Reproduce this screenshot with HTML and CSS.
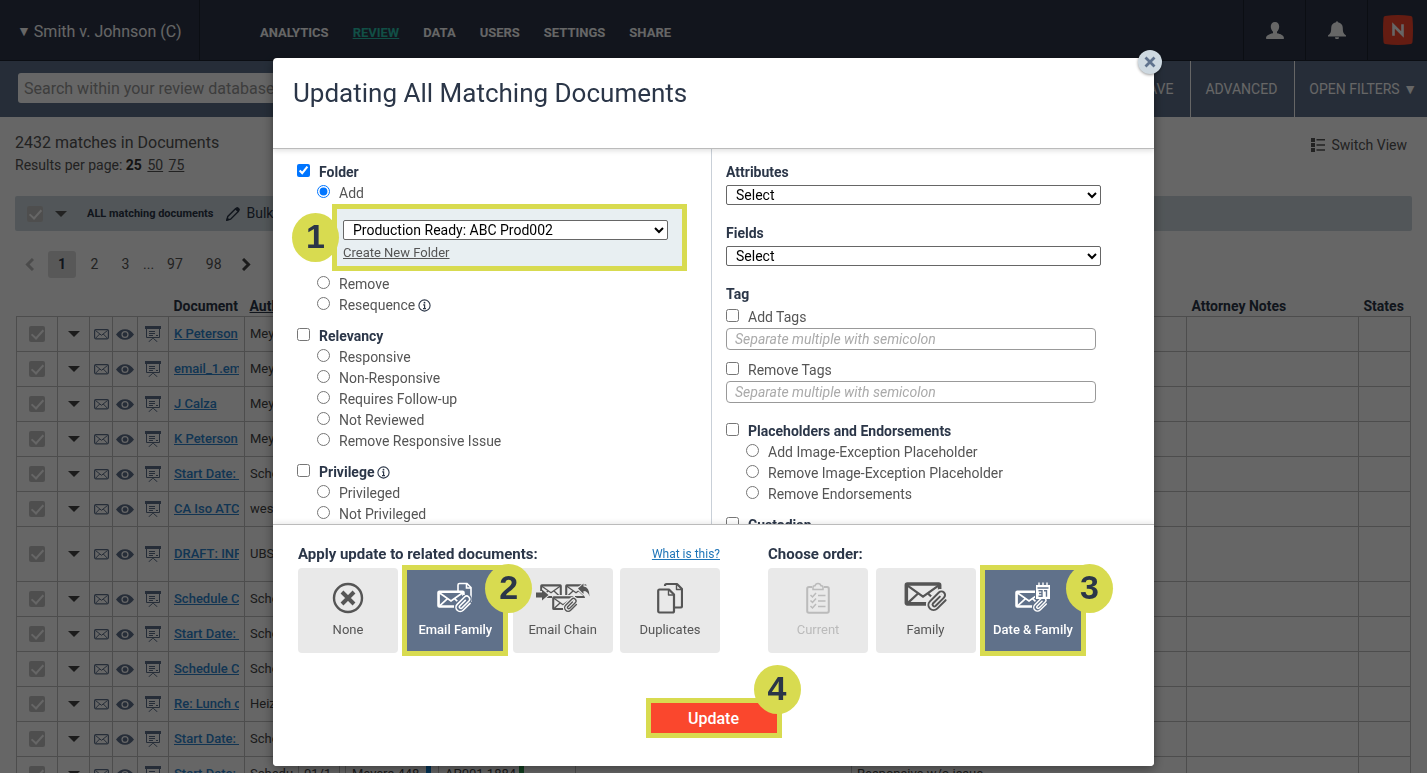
FILE: index.html
```
<!DOCTYPE html>
<html lang="en-US">
<head>
    <meta charset="UTF-8">
    <title>Updating All Matching Documents</title>
    <link rel="stylesheet" href="styles.css">
</head>
<body>

<!-- icon sprite -->
<svg class="sprite" aria-hidden="true">
    <symbol id="i-down" viewBox="0 0 12 6"><path fill="currentColor" d="M0 0h12L6 6z"/></symbol>
    <symbol id="i-mail" viewBox="0 0 15 11">
        <g fill="none" stroke="currentColor"><rect x=".6" y=".6" width="13.8" height="9.2" rx="1.2" stroke-width="1.2"/><path d="M1.5 1.5l6 4.8 6-4.8M1.8 9l3.9-4M13.2 9L9.3 5"/></g>
    </symbol>
    <symbol id="i-eye" viewBox="0 0 18 11">
        <path fill="currentColor" fill-rule="evenodd" d="M0 5.5C2.5 2 5.500.2 9 .2S15.500 2 18 5.500C15.500 9 12.500 10.800 9 10.800S2.500 9 0 5.500zM9 1.900a3.600 3.600 0 1 0 0 7.200 3.600 3.600 0 0 0 0-7.200z"/>
        <circle cx="9" cy="5.500" r="2.300" fill="currentColor"/>
    </symbol>
    <symbol id="i-board" viewBox="0 0 16 16">
        <path fill="currentColor" d="M0 0h16v3H0z"/>
        <path fill="none" stroke="currentColor" d="M1.500 3v8.500h13V3M4 5.500h6M4 7.500h6M4 9.500h4M11 9.500h2M8 12v1M7.500 12.500L3.500 16M8.500 12.500l4 3.500"/>
    </symbol>
    <symbol id="i-clip" viewBox="0 0 24 24">
        <path fill="none" stroke="currentColor" stroke-linecap="round" d="M21.400 11.100l-9.200 9.200a5.200 5.200 0 0 1-7.900-7.900l9.700-9.700a3.900 3.900 0 0 1 5.600 5.600l-9.200 9.200a2 2 0 0 1-2.800-2.800l7.500-7.500"/>
    </symbol>
    <symbol id="i-letter" viewBox="0 0 36 24">
        <path fill="none" stroke="currentColor" stroke-width="3.400" stroke-linejoin="round" d="M3 2h30q1 0 1 1v17q0 1-1 1H3q-1 0-1-1V3q0-1 1-1z"/>
        <path fill="none" stroke="currentColor" stroke-width="2.200" d="M2.500 3L18 14 33.500 3M3 20.500l10.500-9.700M33 20.500l-10.500-9.700"/>
    </symbol>
    <symbol id="i-info" viewBox="0 0 13 13">
        <circle cx="6.500" cy="6.500" r="5.600" fill="none" stroke="currentColor" stroke-width="1.100"/>
        <circle cx="6.500" cy="3.700" r=".9" fill="currentColor"/>
        <path fill="none" stroke="currentColor" stroke-width="1.200" d="M5.200 5.900h1.400v3.500M5 9.600h3"/>
    </symbol>
</svg>

<div class="page">
    <header class="topbar">
        <div class="case"><span class="caret">▼</span>Smith v. Johnson (C)</div>
        <nav class="mainnav">
            <a href="#">ANALYTICS</a>
            <a href="#" class="current">REVIEW</a>
            <a href="#">DATA</a>
            <a href="#">USERS</a>
            <a href="#">SETTINGS</a>
            <a href="#">SHARE</a>
        </nav>
        <a class="topicon" href="#" aria-label="Account">
            <svg width="18" height="17" viewBox="0 0 18 17"><path fill="currentColor" d="M9 0c2.600 0 4.200 1.900 4.200 4.500 0 2.200-1 4.200-2.200 5.200v1.500c3.500.7 7 2 7 5.100 0 .4-.3.700-.7.700H.7c-.4 0-.7-.3-.7-.7 0-3.100 3.500-4.400 7-5.100V9.700c-1.200-1-2.200-3-2.200-5.200C4.800 1.900 6.400 0 9 0z"/></svg>
        </a>
        <a class="topicon" href="#" aria-label="Notifications">
            <svg width="18" height="18" viewBox="0 0 18 18"><path fill="currentColor" d="M8 1.200a1 1 0 0 1 2 0c3 .5 4.800 2.600 4.800 5.800 0 4.500.9 5.800 3.200 7.500V15.500H0V14.500C2.300 12.800 3.200 11.500 3.200 7c0-3.200 1.800-5.300 4.800-5.800zM7 16.200h4a2 2 0 0 1-4 0z"/></svg>
        </a>
        <a class="topicon" href="#" aria-label="Home">
            <svg width="30" height="30" viewBox="0 0 30 30"><path fill="#f9472d" d="M2 1Q15-1 28 1q1.500.3 1.500 2Q30.500 15 29.500 27q0 1.700-1.500 2Q15 31 2 29q-1.500-.3-1.500-2Q-.5 15 .5 3 .5 1.300 2 1z"/><path fill="none" stroke="#fff" stroke-width="2.600" d="M10.500 20.800V10.500l9 9V9.200"/><path stroke="#f9472d" stroke-width="1" d="M13 16v5M17 9v5"/></svg>
        </a>
    </header>

    <div class="searchbar">
        <input type="text" class="search" placeholder="Search within your review database" aria-label="Search">
        <button type="button">SAVE</button>
        <button type="button">ADVANCED</button>
        <button type="button">OPEN FILTERS <span class="caret">▼</span></button>
    </div>

    <main class="content">
        <div class="summary">
            <div>
                <div class="matches">2432 matches in Documents</div>
                <div class="perpage">Results per page: <b>25</b> <a href="#">50</a> <a href="#">75</a></div>
            </div>
            <a class="switchview" href="#">
                <svg width="14" height="14" viewBox="0 0 14 14"><path fill="currentColor" d="M0 0h4v4H0zM0 5h4v4H0zM0 10h4v4H0zM5.500 1H14v1.500H5.500zM5.500 6.200H14v1.500H5.500zM5.500 11.200H14v1.500H5.500z"/></svg>
                Switch View
            </a>
        </div>

        <div class="toolbar">
            <input type="checkbox" class="tick" checked aria-label="Select all">
            <svg class="down" width="12" height="6"><use href="#i-down"/></svg>
            <b>ALL matching documents</b>
            <svg class="pencil" width="14" height="14" viewBox="0 0 14 14"><path fill="none" stroke="currentColor" stroke-width="1.400" d="M.8 13.200l1-3.800L9.500 1.700l2.800 2.800-7.700 7.700z"/><path fill="currentColor" d="M0 14l1.200-3.800 2.600 2.600zM9 1.500l1.500-1.200q1-.6 1.900.2l1 1q.9.900.2 1.900L12.400 5z"/></svg>
            <span>Bulk Actions</span>
        </div>

        <nav class="pager">
            <svg class="off" width="9" height="13" viewBox="0 0 9 13"><path d="M8 1L2.500 6.500 8 12"/></svg>
            <a href="#" class="on">1</a>
            <a href="#">2</a>
            <a href="#">3</a>
            <i>...</i>
            <a href="#">97</a>
            <a href="#">98</a>
            <svg width="9" height="13" viewBox="0 0 9 13"><path d="M1 1l5.500 5.500L1 12"/></svg>
        </nav>

        <table class="docs">
            <colgroup>
                <col class="c-tick"><col class="c-menu"><col class="c-mail"><col class="c-eye"><col class="c-board"><col class="c-doc"><col class="c-author"><col class="c-date"><col class="c-prod"><col class="c-wide"><col><col class="c-notes"><col class="c-states">
            </colgroup>
            <thead>
            <tr><th></th><th></th><th></th><th></th><th></th><th>Document</th><th><a href="#">Author</a></th><th></th><th></th><th></th><th></th><th>Attorney Notes</th><th>States</th></tr>
            </thead>
            <tbody>
            <tr>
                <td><input type="checkbox" class="tick" checked aria-label="Select"></td><td><svg width="12" height="6"><use href="#i-down"/></svg></td><td><svg width="15" height="11"><use href="#i-mail"/></svg></td><td><svg width="18" height="11"><use href="#i-eye"/></svg></td><td><svg width="16" height="16"><use href="#i-board"/></svg></td>
                <td><a href="#">K Peterson</a></td><td>Meyers</td><td></td><td></td><td></td><td></td><td></td><td></td>
            </tr>
            <tr>
                <td><input type="checkbox" class="tick" checked aria-label="Select"></td><td><svg width="12" height="6"><use href="#i-down"/></svg></td><td><svg width="15" height="11"><use href="#i-mail"/></svg></td><td><svg width="18" height="11"><use href="#i-eye"/></svg></td><td><svg width="16" height="16"><use href="#i-board"/></svg></td>
                <td><a href="#">email_1.eml</a></td><td>Meyers</td><td></td><td></td><td></td><td></td><td></td><td></td>
            </tr>
            <tr>
                <td><input type="checkbox" class="tick" checked aria-label="Select"></td><td><svg width="12" height="6"><use href="#i-down"/></svg></td><td><svg width="15" height="11"><use href="#i-mail"/></svg></td><td><svg width="18" height="11"><use href="#i-eye"/></svg></td><td><svg width="16" height="16"><use href="#i-board"/></svg></td>
                <td><a href="#">J Calza</a></td><td>Meyers</td><td></td><td></td><td></td><td></td><td></td><td></td>
            </tr>
            <tr>
                <td><input type="checkbox" class="tick" checked aria-label="Select"></td><td><svg width="12" height="6"><use href="#i-down"/></svg></td><td><svg width="15" height="11"><use href="#i-mail"/></svg></td><td><svg width="18" height="11"><use href="#i-eye"/></svg></td><td><svg width="16" height="16"><use href="#i-board"/></svg></td>
                <td><a href="#">K Peterson</a></td><td>Meyers</td><td></td><td></td><td></td><td></td><td></td><td></td>
            </tr>
            <tr>
                <td><input type="checkbox" class="tick" checked aria-label="Select"></td><td><svg width="12" height="6"><use href="#i-down"/></svg></td><td><svg width="15" height="11"><use href="#i-mail"/></svg></td><td><svg width="18" height="11"><use href="#i-eye"/></svg></td><td><svg width="16" height="16"><use href="#i-board"/></svg></td>
                <td><a href="#">Start Date: 1</a></td><td>Schedu</td><td></td><td></td><td></td><td></td><td></td><td></td>
            </tr>
            <tr>
                <td><input type="checkbox" class="tick" checked aria-label="Select"></td><td><svg width="12" height="6"><use href="#i-down"/></svg></td><td><svg width="15" height="11"><use href="#i-mail"/></svg></td><td><svg width="18" height="11"><use href="#i-eye"/></svg></td><td><svg width="16" height="16"><use href="#i-board"/></svg></td>
                <td><a href="#">CA Iso ATC</a></td><td>wes</td><td></td><td></td><td></td><td></td><td></td><td></td>
            </tr>
            <tr class="tall">
                <td><input type="checkbox" class="tick" checked aria-label="Select"></td><td><svg width="12" height="6"><use href="#i-down"/></svg></td><td><svg width="15" height="11"><use href="#i-mail"/></svg></td><td><svg width="18" height="11"><use href="#i-eye"/></svg></td><td><svg width="16" height="16"><use href="#i-board"/></svg></td>
                <td><a href="#">DRAFT: INF</a></td><td>UBS</td><td></td><td></td><td></td><td></td><td></td><td></td>
            </tr>
            <tr>
                <td><input type="checkbox" class="tick" checked aria-label="Select"></td><td><svg width="12" height="6"><use href="#i-down"/></svg></td><td><svg width="15" height="11"><use href="#i-mail"/></svg></td><td><svg width="18" height="11"><use href="#i-eye"/></svg></td><td><svg width="16" height="16"><use href="#i-board"/></svg></td>
                <td><a href="#">Schedule C</a></td><td>Schedu</td><td></td><td></td><td></td><td></td><td></td><td></td>
            </tr>
            <tr>
                <td><input type="checkbox" class="tick" checked aria-label="Select"></td><td><svg width="12" height="6"><use href="#i-down"/></svg></td><td><svg width="15" height="11"><use href="#i-mail"/></svg></td><td><svg width="18" height="11"><use href="#i-eye"/></svg></td><td><svg width="16" height="16"><use href="#i-board"/></svg></td>
                <td><a href="#">Start Date: 1</a></td><td>Schedu</td><td></td><td></td><td></td><td></td><td></td><td></td>
            </tr>
            <tr>
                <td><input type="checkbox" class="tick" checked aria-label="Select"></td><td><svg width="12" height="6"><use href="#i-down"/></svg></td><td><svg width="15" height="11"><use href="#i-mail"/></svg></td><td><svg width="18" height="11"><use href="#i-eye"/></svg></td><td><svg width="16" height="16"><use href="#i-board"/></svg></td>
                <td><a href="#">Schedule C</a></td><td>Schedu</td><td></td><td></td><td></td><td></td><td></td><td></td>
            </tr>
            <tr>
                <td><input type="checkbox" class="tick" checked aria-label="Select"></td><td><svg width="12" height="6"><use href="#i-down"/></svg></td><td><svg width="15" height="11"><use href="#i-mail"/></svg></td><td><svg width="18" height="11"><use href="#i-eye"/></svg></td><td><svg width="16" height="16"><use href="#i-board"/></svg></td>
                <td><a href="#">Re: Lunch on</a></td><td>Heiz</td><td></td><td></td><td></td><td></td><td></td><td></td>
            </tr>
            <tr>
                <td><input type="checkbox" class="tick" checked aria-label="Select"></td><td><svg width="12" height="6"><use href="#i-down"/></svg></td><td><svg width="15" height="11"><use href="#i-mail"/></svg></td><td><svg width="18" height="11"><use href="#i-eye"/></svg></td><td><svg width="16" height="16"><use href="#i-board"/></svg></td>
                <td><a href="#">Start Date: 1</a></td><td>Schedu</td><td></td><td></td><td></td><td></td><td></td><td></td>
            </tr>
            <tr>
                <td><input type="checkbox" class="tick" checked aria-label="Select"></td><td><svg width="12" height="6"><use href="#i-down"/></svg></td><td><svg width="15" height="11"><use href="#i-mail"/></svg></td><td><svg width="18" height="11"><use href="#i-eye"/></svg></td><td><svg width="16" height="16"><use href="#i-board"/></svg></td>
                <td><a href="#">Start Date: 1</a></td><td>Schedu</td><td>01/1</td><td><span class="prod blue">Meyers 448</span><span class="prod green">AP001 1884</span></td><td></td><td>Responsive w/o issue</td><td></td><td></td>
            </tr>
            </tbody>
        </table>
    </main>
</div>

<div class="overlay">
    <form class="modal" role="dialog" aria-labelledby="title">
        <button type="button" class="close" aria-label="Close">
            <svg width="12" height="12" viewBox="0 0 12 12"><path stroke="currentColor" stroke-width="2.800" d="M1.500 1.500l9 9M10.500 1.500l-9 9"/></svg>
        </button>
        <header class="modal-head">
            <h1 id="title">Updating All Matching Documents</h1>
        </header>

        <div class="modal-body">
            <div class="col">
                <div class="group">
                    <label class="row head"><input type="checkbox" checked>Folder</label>
                    <label class="row sub"><input type="radio" name="folder" checked>Add</label>
                    <div class="folder-pick marked">
                        <select aria-label="Folder name"><option>Production Ready: ABC Prod002</option></select>
                        <a href="#">Create New Folder</a>
                        <span class="step step-1">1</span>
                    </div>
                    <label class="row sub"><input type="radio" name="folder">Remove</label>
                    <label class="row sub"><input type="radio" name="folder">Resequence <svg class="info" width="13" height="13"><use href="#i-info"/></svg></label>
                </div>
                <div class="group">
                    <label class="row head"><input type="checkbox">Relevancy</label>
                    <label class="row sub"><input type="radio" name="rel">Responsive</label>
                    <label class="row sub"><input type="radio" name="rel">Non-Responsive</label>
                    <label class="row sub"><input type="radio" name="rel">Requires Follow-up</label>
                    <label class="row sub"><input type="radio" name="rel">Not Reviewed</label>
                    <label class="row sub"><input type="radio" name="rel">Remove Responsive Issue</label>
                </div>
                <div class="group">
                    <label class="row head"><input type="checkbox">Privilege <svg class="info" width="13" height="13"><use href="#i-info"/></svg></label>
                    <label class="row sub"><input type="radio" name="priv">Privileged</label>
                    <label class="row sub"><input type="radio" name="priv">Not Privileged</label>
                </div>
            </div>

            <div class="col">
                <div class="field">
                    <label class="row head" for="attributes">Attributes</label>
                    <select id="attributes"><option>Select</option></select>
                </div>
                <div class="field">
                    <label class="row head" for="fields">Fields</label>
                    <select id="fields"><option>Select</option></select>
                </div>
                <div class="tags">
                    <div class="row head">Tag</div>
                    <label class="row"><input type="checkbox">Add Tags</label>
                    <input type="text" placeholder="Separate multiple with semicolon" aria-label="Tags to add">
                    <label class="row"><input type="checkbox">Remove Tags</label>
                    <input type="text" placeholder="Separate multiple with semicolon" aria-label="Tags to remove">
                </div>
                <div class="group">
                    <label class="row head"><input type="checkbox">Placeholders and Endorsements</label>
                    <label class="row sub"><input type="radio" name="place">Add Image-Exception Placeholder</label>
                    <label class="row sub"><input type="radio" name="place">Remove Image-Exception Placeholder</label>
                    <label class="row sub"><input type="radio" name="place">Remove Endorsements</label>
                </div>
                <div class="group">
                    <label class="row head"><input type="checkbox">Custodian</label>
                </div>
            </div>
        </div>

        <footer class="modal-foot">
            <div class="choices">
                <section class="related">
                    <div class="choices-head"><h2>Apply update to related documents:</h2><a href="#">What is this?</a></div>
                    <div class="tiles">
                        <button type="button" class="tile">
                            <svg width="32" height="32" viewBox="0 0 32 32"><circle cx="16" cy="16" r="14" fill="none" stroke="currentColor" stroke-width="2.400"/><path stroke="currentColor" stroke-width="4" d="M10 10l12 12M22 10L10 22"/></svg>
                            None
                        </button>
                        <button type="button" class="tile selected marked">
                            <svg width="36" height="32" viewBox="0 0 36 32">
                                <path fill="none" stroke="currentColor" stroke-width="1.600" d="M21 9V3q0-1.500 1.500-1.500H30l4 4V20q0 1.500-1.500 1.500M29.500 2v4H34"/>
                                <use href="#i-letter" x="0" y="8" width="28" height="19"/>
                                <use href="#i-clip" class="halo" x="17" y="13" width="18" height="18"/>
                                <use href="#i-clip" class="clip" x="17" y="13" width="18" height="18"/>
                            </svg>
                            Email Family
                            <span class="step step-2">2</span>
                        </button>
                        <button type="button" class="tile">
                            <svg width="54" height="32" viewBox="0 0 54 32">
                                <use href="#i-letter" x="4" y="2" width="22" height="15"/>
                                <use href="#i-letter" x="29" y="2" width="22" height="15"/>
                                <path class="gap" d="M16 13h23v17H16z"/>
                                <use href="#i-letter" x="16" y="14" width="22" height="15"/>
                                <path class="gap" d="M0 9h6V6l8 7-8 7v-3H0z"/>
                                <path fill="currentColor" d="M0 10.500h6V7.500l6.500 5.500L6 18.500v-3H0z"/>
                                <path class="gap" d="M40 6.500l8.500-6.500v3.500h6v14h-5q-1-4-2-4z"/>
                                <path fill="currentColor" d="M42 6.500l5.500-5v3q6 .5 6 10-1.500-5.500-6-5.500v3z"/>
                                <use href="#i-clip" class="halo" x="27" y="15" width="15" height="16"/>
                                <use href="#i-clip" class="clip" x="27" y="15" width="15" height="16"/>
                            </svg>
                            Email Chain
                        </button>
                        <button type="button" class="tile">
                            <svg width="26" height="32" viewBox="0 0 26 32">
                                <g fill="none" stroke="currentColor" stroke-width="2.200" stroke-linejoin="round"><path d="M8 4V3.500Q8 2 9.500 2H20l5 5v17q0 1.500-1.500 1.500H17M2.500 7.500H12l5 5V29q0 1.500-1.500 1.500h-13Q1.200 30.500 1.200 29V9q0-1.500 1.300-1.500z"/><path stroke-width="1.400" d="M19.500 2.500v5H25M11.500 8v5H17"/></g>
                            </svg>
                            Duplicates
                        </button>
                    </div>
                </section>
                <section class="order">
                    <div class="choices-head"><h2>Choose order:</h2></div>
                    <div class="tiles">
                        <button type="button" class="tile" disabled>
                            <svg width="24" height="32" viewBox="0 0 24 32">
                                <g fill="none" stroke="currentColor" stroke-width="1.500"><path stroke-width="2" d="M6 5H3Q1.200 5 1.200 6.800V29q0 1.800 1.800 1.800h18q1.800 0 1.800-1.800V6.800Q22.800 5 21 5h-3"/><path d="M7 7.500V5q0-1.200 1.500-1.200H9Q9.500 1.500 12 1.500t3 2.300h.5Q17 3.800 17 5v2.500zM4.500 13l2 2 3.500-4M4.500 18.500l2 2 3.500-4M4.500 24l2 2 3.500-4M12 13.500h7.500M12 19h7.500M12 24.500h7.500"/></g>
                            </svg>
                            Current
                        </button>
                        <button type="button" class="tile">
                            <svg width="44" height="32" viewBox="0 0 44 32">
                                <use href="#i-letter" x="0" y="0" width="38" height="25"/>
                                <use href="#i-clip" class="halo" x="22" y="7" width="22" height="24"/>
                                <use href="#i-clip" class="clip" x="22" y="7" width="22" height="24"/>
                            </svg>
                            Family
                        </button>
                        <button type="button" class="tile selected marked">
                            <svg width="36" height="32" viewBox="0 0 36 32">
                                <use href="#i-letter" x="0" y="8" width="28" height="19"/>
                                <path class="gap" d="M20 2h15v14H20z"/>
                                <use href="#i-clip" class="halo" x="17" y="14" width="16" height="17"/>
                                <use href="#i-clip" class="clip" x="17" y="14" width="16" height="17"/>
                                <path fill="currentColor" d="M21 3h14v14H21z"/>
                                <path class="ink" d="M22.500 6h11M23.500 8.700h3.500v5.600h-3.500M24 11.500h3M29 8.700h2.500v6"/>
                                <path stroke="currentColor" stroke-width="1.400" d="M24 .5v4M28 .5v4M32 .5v4"/>
                            </svg>
                            Date &amp; Family
                            <span class="step step-3">3</span>
                        </button>
                    </div>
                </section>
            </div>
            <button type="submit" class="update marked">Update<span class="step step-4">4</span></button>
        </footer>
    </form>
</div>

</body>
</html>
```
FILE: styles.css
```
* {
    box-sizing: border-box;
}

html, body {
    height: 100%;
    overflow: hidden;
}

body {
    margin: 0;
    font-family: Roboto, "Liberation Sans", sans-serif;
    font-size: 14px;
    line-height: 21px;
    color: #555;
    background: #fff;
}

button, input, select {
    font: inherit;
    margin: 0;
}

button {
    cursor: pointer;
}

a {
    color: inherit;
}

.sprite {
    display: none;
}

.page {
    height: 100%;
    overflow: hidden;
}

/* top bar */

.topbar {
    display: flex;
    align-items: stretch;
    height: 61px;
    background: #2d364a;
    border-bottom: 1px solid #1c2331;
    color: #fff;
}

.case {
    display: flex;
    align-items: center;
    gap: 3px;
    width: 200px;
    padding-left: 17px;
    padding-top: 2px;
    border-right: 1px solid #1c2331;
    font-size: 16px;
    white-space: nowrap;
}

.caret {
    font-size: 14px;
}

.mainnav {
    display: flex;
    flex: 1;
    align-items: center;
    gap: 24px;
    padding: 5px 0 0 60px;
    font-size: 13px;
    font-weight: bold;
}

.mainnav a {
    text-decoration: none;
}

.mainnav .current {
    color: #2cc5b0;
    text-decoration: underline;
}

.topicon {
    display: flex;
    align-items: center;
    justify-content: center;
    width: 62px;
    border-left: 1px solid #1c2331;
    color: #fff;
}

.topicon:last-child {
    width: 60px;
}

/* search bar */

.searchbar {
    display: flex;
    align-items: stretch;
    height: 56px;
    background: #5f728d;
}

.search {
    flex: 1;
    height: 30px;
    margin: 12px 20px 0 18px;
    padding: 0 6px;
    border: 0;
    border-radius: 3px;
    background: #fff;
    font-size: 16px;
}

.search::placeholder {
    color: #999;
}

.searchbar button {
    padding: 0 17px 0 14px;
    border: 0;
    border-left: 1px solid #fff;
    background: none;
    color: #fff;
}

.searchbar button:last-child {
    padding-right: 10px;
}

/* results */

.content {
    padding: 13px 15px 0;
}

.summary {
    display: flex;
    justify-content: space-between;
    height: 66px;
}

.matches {
    font-size: 16px;
    line-height: 25px;
}

.perpage b {
    color: #333;
}

.perpage a {
    margin-left: 2px;
}

.switchview {
    display: flex;
    align-items: center;
    gap: 6px;
    height: 30px;
    padding-right: 5px;
    text-decoration: none;
}

.toolbar {
    display: flex;
    align-items: center;
    height: 35px;
    padding-left: 12px;
    border-radius: 2px;
    background: #cdd8de;
    color: #2b3648;
}

.toolbar b {
    margin: 0 13px 0 20px;
    font-size: 11px;
}

.toolbar .down {
    margin-left: 12px;
    color: #555;
}

.pencil {
    margin-right: 6px;
}

.tick {
    appearance: none;
    display: block;
    width: 16px;
    height: 16px;
    margin: 0 auto;
    border-radius: 2px;
    background: #c4c4c4;
}

.tick::after {
    content: "";
    display: block;
    width: 5px;
    height: 10px;
    margin: 1px 0 0 5px;
    border: solid #fff;
    border-width: 0 2px 2px 0;
    transform: rotate(42deg);
}

.toolbar .tick {
    margin: 0;
    background: #c4c4c4;
}

.pager {
    display: flex;
    align-items: center;
    height: 27px;
    margin: 20px 0 18px;
    padding-left: 10px;
}

.pager a {
    min-width: 31px;
    padding: 3px 8px;
    text-align: center;
    text-decoration: none;
}

.pager a.on {
    min-width: 28px;
    margin: 0 3px 0 14px;
    border-radius: 3px;
    background: #dcdcdc;
    color: #2b3648;
    font-weight: bold;
}

.pager i {
    margin: 0 5px 0 2px;
    font-style: normal;
}

.pager a:nth-of-type(5) {
    margin-left: 7px;
}

.pager svg {
    fill: none;
    stroke: #444;
    stroke-width: 3;
}

.pager svg:last-child {
    margin-left: 12px;
}

.pager .off {
    stroke: #bbb;
}

.docs {
    table-layout: fixed;
    width: calc(100% - 2px);
    margin: 0 1px;
    border-collapse: collapse;
    font-size: 13px;
    line-height: 20px;
    color: #444;
}

.c-tick { width: 41px; }
.c-menu { width: 32px; }
.c-mail { width: 23px; }
.c-eye { width: 25px; }
.c-board { width: 31px; }
.c-doc { width: 76px; }
.c-author { width: 54px; }
.c-date { width: 41px; }
.c-prod { width: 236px; }
.c-wide { width: 276px; }
.c-notes { width: 172px; }
.c-states { width: 52px; }

.docs th {
    padding: 0 0 0 5px;
    color: #2b3648;
    font-size: 14px;
    text-align: left;
    white-space: nowrap;
}

.docs td {
    height: 35px;
    padding: 0 5px;
    border: 1px solid #c0c0c0;
    overflow: hidden;
    white-space: nowrap;
}

.docs .tall td {
    height: 55px;
}

.docs td:nth-child(-n+5) {
    padding: 0;
}

.docs td > a {
    display: block;
    overflow: hidden;
    color: #2e86cf;
    font-weight: 500;
}

.docs td svg {
    display: block;
    margin: 0 auto;
    color: #5f728d;
}

.docs td:nth-child(2) svg {
    color: #444;
}

.prod {
    display: inline-block;
    width: 86px;
    margin-right: 7px;
    padding-left: 6px;
    border: 1px solid #c0c0c0;
    border-right: 5px solid #0a7fd6;
}

.prod.green {
    border-right-color: #2c9a4b;
}

/* modal */

.overlay {
    position: fixed;
    inset: 0;
    display: flex;
    justify-content: center;
    padding: 58px 20px 7px;
    background: rgba(0, 0, 0, .6);
}

.modal {
    position: relative;
    display: flex;
    flex-direction: column;
    width: 100%;
    max-width: 881px;
    border-radius: 4px;
    background: #fff;
    box-shadow: 0 3px 12px rgba(0, 0, 0, .4);
}

.close {
    position: absolute;
    z-index: 2;
    top: -8px;
    right: -8px;
    display: flex;
    align-items: center;
    justify-content: center;
    width: 24px;
    height: 24px;
    padding: 0;
    border: 0;
    border-radius: 50%;
    background: #ced9e1;
    color: #5f728d;
    box-shadow: 0 1px 3px rgba(0, 0, 0, .4);
}

.modal-head {
    z-index: 1;
    height: 91px;
    padding: 17px 20px;
    border-bottom: 1px solid #bbb;
    border-radius: 4px 4px 0 0;
    box-shadow: 0 2px 5px rgba(0, 0, 0, .12);
}

h1 {
    margin: 0;
    color: #2b3648;
    font-size: 26px;
    font-weight: normal;
    line-height: 36px;
}

h2 {
    margin: 0;
    color: #2b3648;
    font-size: 15px;
    font-weight: bold;
}

.modal-body {
    display: grid;
    grid-template-columns: 438px 1fr;
    flex: 1;
    min-height: 0;
    overflow: hidden;
}

.col {
    padding: 13px 24px 0;
}

.col + .col {
    padding: 13px 53px 0 14px;
    border-left: 1px solid #c9d0d8;
}

.group {
    margin-bottom: 10px;
}

.row {
    display: flex;
    align-items: flex-start;
    min-height: 21px;
}

.row input {
    width: 13px;
    height: 13px;
    margin: 2px 9px 0 0;
}

.head {
    color: #2b3648;
    font-weight: bold;
}

.sub {
    padding-left: 20px;
}

.info {
    margin: 4px 0 0 3px;
    color: #2b3648;
}

.col select {
    display: block;
    height: 20px;
    padding: 0 1px 0 5px;
    border: 1px solid #666;
    border-radius: 2px;
    background: #fff;
    color: #000;
    line-height: 18px;
}

.folder-pick {
    margin: 0 0 3px 35px;
    height: 67px;
    padding: 16px 19px 0 11px;
    background: #e8eff2;
}

.folder-pick select {
    width: 100%;
}

.folder-pick a {
    display: block;
    font-size: 13px;
    line-height: 26px;
}

.field select {
    width: 375px;
    margin: 2px 0 18px;
}

.tags {
    margin-bottom: 18px;
}

.tags .head {
    margin-bottom: 2px;
}

.tags input[type="text"] {
    display: block;
    width: 370px;
    height: 22px;
    padding: 0 8px;
    border: 1px solid #999;
    border-radius: 4px;
}

.tags input[type="text"] + .row {
    margin-top: 10px;
}

.tags ::placeholder {
    color: #aaa;
    font-style: italic;
}

.modal-foot {
    z-index: 1;
    height: 242px;
    padding: 19px 25px 0;
    border-top: 1px solid #bbb;
    border-radius: 0 0 4px 4px;
    background: #fff;
    box-shadow: 0 -2px 5px rgba(0, 0, 0, .08);
}

.choices {
    display: flex;
    gap: 48px;
}

.related {
    width: 422px;
}

.order {
    width: 315px;
}

.choices-head, .tiles {
    display: flex;
    justify-content: space-between;
}

.choices-head a {
    color: #1f75b8;
    font-size: 12px;
}

.choices-head {
    height: 24px;
}

.tile {
    display: flex;
    flex-direction: column;
    align-items: center;
    gap: 9px;
    width: 100px;
    height: 85px;
    padding: 14px 0 0;
    border: 0;
    border-radius: 4px;
    background: #e9e9e9;
    color: #555;
    font-size: 13px;
    line-height: 14px;
    --tile: #e9e9e9;
}

.tile.selected {
    background: #60718a;
    color: #fff;
    font-weight: 500;
    --tile: #60718a;
}

.tile:disabled {
    color: #bbb;
}

.halo {
    color: var(--tile);
    stroke-width: 6;
}

.clip {
    stroke-width: 2.2;
}

.gap {
    fill: var(--tile);
}

.ink {
    fill: none;
    stroke: var(--tile);
    stroke-width: 1.4;
}

.update {
    display: block;
    width: 130px;
    height: 34px;
    margin: 48px auto 0;
    border: 0;
    background: #fa472d;
    color: #fff;
    font-size: 16px;
    font-weight: 500;
}

/* highlighted steps */

.marked {
    position: relative;
}

.marked::after {
    content: "";
    position: absolute;
    inset: -3px;
    border: 5px solid #d8db50;
}

.folder-pick.marked::after {
    inset: 0;
    pointer-events: none;
}

.step {
    position: absolute;
    z-index: 1;
    width: 47px;
    height: 49px;
    border-radius: 50%;
    background: #d8db50;
    color: #2b3648;
    font: bold 34px/47px "Liberation Sans", Arial, sans-serif;
    text-align: center;
}

.step-1 {
    top: 9px;
    left: -40px;
}

.step-2 {
    top: -4px;
    right: -27px;
}

.step-3 {
    top: -4px;
    right: -30px;
}

.step-4 {
    top: -36px;
    right: -22px;
}
```
